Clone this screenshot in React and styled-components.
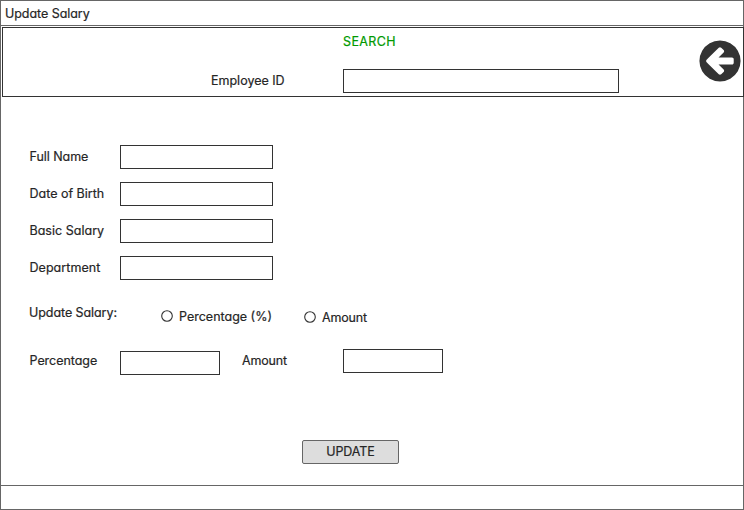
import React from "react";
import styled, { createGlobalStyle } from "styled-components";

const GlobalStyle = createGlobalStyle`
  *, *::before, *::after { box-sizing: border-box; }
  body { margin: 0; background: #fff; }
`;

const Window = styled.main`
  display: flex;
  flex-direction: column;
  width: 744px;
  height: 510px;
  border: 1px solid #666;
  background: #fff;
  color: #262626;
  font-family: Inter, "Noto Sans", sans-serif;
  font-feature-settings: "cv11" 1;
  font-size: 12.5px;
  line-height: 16px;
`;

const TitleBar = styled.header`
  height: 25px;
  padding: 5px 0 0 4px;
  border-bottom: 1px solid #666;
`;

const Text = styled.span`
  display: block;
  white-space: nowrap;
  font-weight: 400;
  -webkit-text-stroke: 0.2px currentColor;
  letter-spacing: ${(p) => p.$track || 0}px;
`;

const SearchPanel = styled.section`
  display: grid;
  grid-template-columns: 208px 132px 276px 1fr;
  grid-template-rows: 41px 24px;
  height: 70px;
  margin: 1px -1px 0 1px;
  border: 1px solid #333;
`;

const SearchHeading = styled.h1`
  grid-column: 3;
  margin: 0;
  padding-top: 6px;
  color: #009900;
  font: inherit;
`;

const SearchLabel = styled.label`
  grid-column: 2;
  grid-row: 2;
  padding-top: 4px;
`;

const TextBox = styled.input`
  display: block;
  width: ${(p) => p.$width}px;
  height: 24px;
  padding: 0 5px;
  border: 1px solid #333;
  border-radius: 0;
  outline: none;
  background: #fff;
  color: inherit;
  font: inherit;
`;

const SearchBox = styled(TextBox)`
  grid-column: 3;
  grid-row: 2;
`;

const BackButton = styled.button`
  grid-column: 4;
  grid-row: 1 / 3;
  justify-self: end;
  align-self: start;
  width: 42px;
  height: 42px;
  margin: 12px 2px 0 0;
  padding: 0;
  border: 0;
  background: none;
  color: #333;

  svg { display: block; width: 42px; height: 42px; }
`;

const Form = styled.form`
  display: flex;
  flex: 1;
  flex-direction: column;
  padding: 48px 0 0 28px;
`;

const Fields = styled.div`
  display: grid;
  gap: 13px;
`;

const Field = styled.label`
  display: grid;
  grid-template-columns: 91px auto;
  height: 24px;

  ${Text} { padding: 4px 0 0 0.5px; }
`;

const ModeRow = styled.div`
  display: grid;
  grid-template-columns: 131px 143px auto;
  height: 22px;
  margin-top: 24px;
`;

const ModeLabel = styled.div`
  padding-top: 1px;
`;

const RadioOption = styled.label`
  display: flex;
  align-items: flex-start;
  gap: 5px;
  padding-top: ${(p) => p.$top}px;

  svg { display: block; width: 14px; height: 14px; }
`;

const AmountRow = styled.div`
  display: grid;
  grid-template-columns: 91px 122px 101px auto;
  height: 26px;
  margin-top: 23px;

  ${Text} { padding-top: 4px; }
  ${Text}:first-child { padding-left: 0.5px; }
`;

const PercentageBox = styled(TextBox)`
  margin-top: 2px;
`;

const UpdateButton = styled.button`
  width: 97px;
  height: 24px;
  margin: 65px 0 0 273px;
  padding: 0;
  border: 1px solid #666;
  border-radius: 2px;
  background: #ddd;
  color: #262626;
  font: inherit;

  ${Text} { text-align: center; }
`;

const StatusBar = styled.footer`
  height: 24px;
  border-top: 1px solid #666;
`;

function BackIcon() {
  return (
    <svg viewBox="-16 -144 1568 1568" fill="currentColor" aria-hidden="true">
      <path d="M1280 704v-128q0-26-19-45t-45-19h-502l189-189q19-19 19-45t-19-45l-91-91q-18-18-45-18t-45 18l-362 362-91 91q-18 18-18 45t18 45l91 91 362 362q18 18 45 18t45-18l91-91q18-18 18-45t-18-45l-189-189h502q26 0 45-19t19-45z M1536 640q0 209-103 385.5t-279.5 279.5t-385.5 103t-385.5-103t-279.5-279.5t-103-385.5t103-385.5t279.5-279.5t385.5-103t385.5 103t279.5 279.5t103 385.5z" fillRule="evenodd" />
    </svg>
  );
}

function RadioIcon() {
  return (
    <svg viewBox="0 0 14 14" aria-hidden="true">
      <circle cx="7" cy="7" r="5.3" fill="#fff" stroke="#333" strokeWidth="1.1" />
    </svg>
  );
}

const fields = [
  { label: "Full Name", track: -0.05 },
  { label: "Date of Birth", track: 0 },
  { label: "Basic Salary", track: 0.02 },
  { label: "Department", track: 0.05 },
];

export default function App() {
  return (
    <>
      <GlobalStyle />
      <Window>
        <TitleBar>
          <Text $track={-0.05}>Update Salary</Text>
        </TitleBar>
        <SearchPanel>
          <SearchHeading>
            <Text $track={0.4}>SEARCH</Text>
          </SearchHeading>
          <SearchLabel htmlFor="employee-id">
            <Text>Employee ID</Text>
          </SearchLabel>
          <SearchBox id="employee-id" $width={276} />
          <BackButton type="button" aria-label="Back">
            <BackIcon />
          </BackButton>
        </SearchPanel>
        <Form>
          <Fields>
            {fields.map((f) => (
              <Field key={f.label}>
                <Text $track={f.track}>{f.label}</Text>
                <TextBox $width={153} />
              </Field>
            ))}
          </Fields>
          <ModeRow>
            <ModeLabel>
              <Text $track={-0.07}>Update Salary:</Text>
            </ModeLabel>
            <RadioOption $top={5}>
              <RadioIcon />
              <Text>Percentage (%)</Text>
            </RadioOption>
            <RadioOption $top={6}>
              <RadioIcon />
              <Text $track={-0.15}>Amount</Text>
            </RadioOption>
          </ModeRow>
          <AmountRow>
            <Text $track={-0.04}>Percentage</Text>
            <PercentageBox $width={100} aria-label="Percentage" />
            <Text $track={-0.15}>Amount</Text>
            <TextBox $width={100} aria-label="Amount" />
          </AmountRow>
          <UpdateButton type="button">
            <Text $track={-0.1}>UPDATE</Text>
          </UpdateButton>
        </Form>
        <StatusBar />
      </Window>
    </>
  );
}
